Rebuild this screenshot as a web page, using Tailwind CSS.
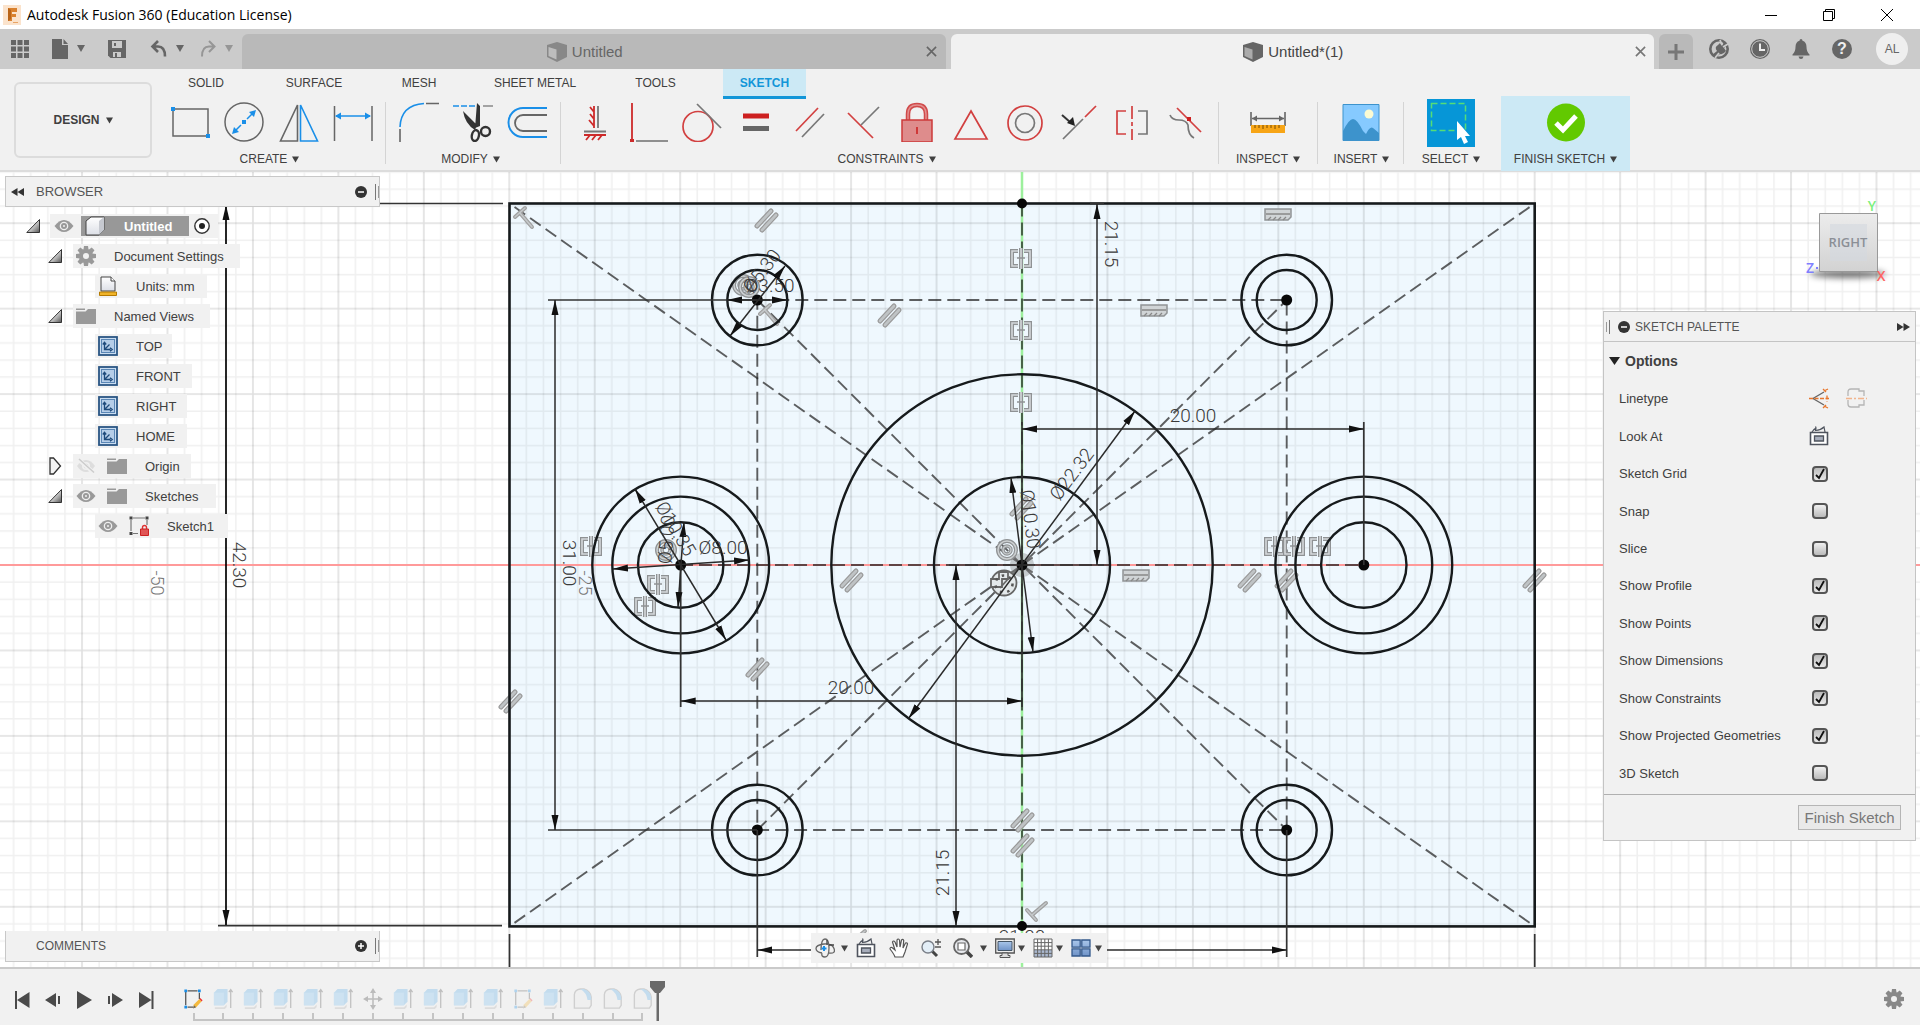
<!DOCTYPE html>
<html lang="en">
<head>
<meta charset="utf-8">
<title>Autodesk Fusion 360 (Education License)</title>
<script src="https://cdn.jsdelivr.net/npm/@tailwindcss/browser@4"></script>
</head>
<body class="h-screen min-h-[900px] flex flex-col overflow-hidden bg-white text-[#404040] font-['Liberation_Sans',Arial,sans-serif] text-xs">

<!-- shared symbols -->
<svg class="absolute size-0" aria-hidden="true">
  <defs>
    <linearGradient id="gTri" x1="0" y1="0" x2="1" y2="1"><stop offset="0.3" stop-color="#fff"/><stop offset="1" stop-color="#555"/></linearGradient>
    <linearGradient id="gCube" x1="0" y1="0" x2="0" y2="1"><stop offset="0" stop-color="#fff"/><stop offset="1" stop-color="#dcdfe6"/></linearGradient>
    <linearGradient id="gBlue" x1="0" y1="0" x2="0" y2="1"><stop offset="0" stop-color="#a9c6ea"/><stop offset="1" stop-color="#6f93c8"/></linearGradient>
  </defs>
  <symbol id="down" viewBox="0 0 8 8"><path d="M0 0.500h8L4 7.500z" fill="currentColor"/></symbol>
  <symbol id="open" viewBox="0 0 14 14"><path d="M13.500 0.500v13H0.800z" fill="url(#gTri)" stroke="#333"/></symbol>
  <symbol id="closed" viewBox="0 0 14 18"><path d="M2 1h3.500L12.500 9 5.500 17H2z" fill="#f4f4f4" stroke="#333" stroke-width="1.300"/></symbol>
  <symbol id="eye" viewBox="0 0 20 14"><path d="M0.500 7Q5 1 10 1t9.500 6Q15 13 10 13T0.500 7z" fill="#999"/><circle cx="10" cy="7" r="4.300" fill="#efefef"/><circle cx="10" cy="7" r="3" fill="#999"/><circle cx="10" cy="7" r="1" fill="#efefef"/></symbol>
  <symbol id="eyeoff" viewBox="0 0 20 16"><path d="M1 8Q5 2 10 2t9 6q-4 6-9 6T1 8z" fill="#ddd"/><circle cx="10" cy="8" r="4" fill="#f1f1f1"/><circle cx="10" cy="8" r="2.500" fill="#ddd"/><path d="M2 1l16 14" stroke="#f1f1f1" stroke-width="4"/><path d="M3 1l15 13.500" stroke="#ccc" stroke-width="1.500"/></symbol>
  <symbol id="folder" viewBox="0 0 20 18"><path d="M0 1.500h9v1.500H0zM0 4.500h9.500L12 2h8v15H0z" fill="#999"/></symbol>
  <symbol id="gear" viewBox="-10 -10 20 20"><g fill="currentColor"><path id="tooth" d="M-2-10h4l.6 4h-5.200zM-2 10h4l.6-4h-5.200z"/><use href="#tooth" transform="rotate(45)"/><use href="#tooth" transform="rotate(90)"/><use href="#tooth" transform="rotate(135)"/></g><circle r="5" fill="none" stroke="currentColor" stroke-width="4"/></symbol>
  <symbol id="view" viewBox="0 0 20 20"><rect x="1" y="1" width="18" height="18" fill="#c9dcf0" stroke="#2b5684" stroke-width="1.800"/><rect x="3.500" y="3.500" width="13" height="13" fill="#b5cde8" stroke="#5a86b5"/><path d="M6.500 7v6.500h6M7 13l4.500-4.500M4.800 8.500L6.500 6.300l1.700 2.200M12 11.800l2.200 1.700L12 15.200" fill="none" stroke="#1f4a7a" stroke-width="1.300"/></symbol>
  <symbol id="doccube" viewBox="0 0 20 20"><path d="M0 3l10-3 10 3v12l-10 5L0 15z" fill="currentColor"/><path d="M1.500 5l8 2.500v10L1.500 14z" fill="#fff" fill-opacity=".45"/></symbol>
  <symbol id="xx" viewBox="0 0 12 12"><path d="M1 1l10 10M11 1L1 11" stroke="currentColor" stroke-width="1.800"/></symbol>
  <symbol id="extrude" viewBox="0 0 22 24"><path d="M2 21h10l3-3v3l-2 2H2z" fill="#ddd"/><path d="M1 5l4-4h11v14l-4 4H1z" fill="#c3dcee"/><path d="M1 5h11v14H1z" fill="#cde2f1"/><path d="M19.500 22V3M17.500 4.500l2-3 2 3" fill="none" stroke="#bdbdbd" stroke-width="1.300"/></symbol>
  <symbol id="filletf" viewBox="0 0 22 24"><path d="M1.500 22V7Q2 2 8 1h4q7 2 8 9v9l-2 3z" fill="#efefef" stroke="#cfcfcf" stroke-width="1.500"/><path d="M8 1h4q7 2 8 9v3h-4Q15 5 8 1z" fill="#c3dcee"/></symbol>
  <symbol id="sketch" viewBox="0 0 22 24"><path d="M3 4v15M5 3h11M18 5v7M5 21h6" fill="none" stroke="#555" stroke-width="1.400"/><path d="M1.500 1.500h3v3h-3zM16.500 1.500h3v3h-3zM1.500 19.500h3v3h-3z" fill="#1a8fe8"/><path d="M11 22l1-4 6-6 2.500 2.500-6 6.500z" fill="#f4b93d"/><path d="M18 12l1-1 2.500 2.500-1 1.200z" fill="#e33"/><path d="M11 22.500l1-3.500 2.500 2.200z" fill="#666"/></symbol>
  <symbol id="lookat" viewBox="0 0 20 20"><path d="M1.500 6.500h17v12h-17z" fill="#fff" stroke="#4f545e" stroke-width="1.600"/><path d="M5.500 10h9v5h-9z" fill="#a7adbb" stroke="#4f545e" stroke-width="1.300"/><path d="M3 6q2-3 4-4l-.5-1.500M7 2l-.5 2.500Q12 4 15 1l1 5" fill="none" stroke="#4f545e" stroke-width="1.200"/></symbol>
</svg>

<header class="flex h-[29px] shrink-0 items-center bg-white pl-[3px] text-black">
  <svg class="h-5 w-[18px]" viewBox="0 0 18 20"><path d="M0 0h18v20H0z" fill="#fbe3cc"/><path d="M5 3h9v4H9v2h4v3H9v4H5z" fill="#d9812e"/><path d="M5 3l3 2v9l-3 2z" fill="#b96418"/><path d="M10 17h5v1h-5z" fill="#e8a465"/></svg>
  <h1 class="ml-[6px] font-['Open_Sans','Noto_Sans',sans-serif] text-sm">Autodesk Fusion 360 (Education License)</h1>
  <div class="ml-auto flex pr-1">
    <button aria-label="Minimize" class="flex h-7 w-[58px] items-center justify-center"><svg class="size-3" viewBox="0 0 12 12"><path d="M0 6.500h12" stroke="#000"/></svg></button>
    <button aria-label="Restore" class="flex h-7 w-[58px] items-center justify-center"><svg class="size-3" viewBox="0 0 12 12" fill="none" stroke="#000"><path d="M.5 2.500h9v9h-9zM2.500 2.500v-2h9v9h-2"/></svg></button>
    <button aria-label="Close" class="flex h-7 w-[58px] items-center justify-center"><svg class="size-3" viewBox="0 0 12 12" stroke="#000"><path d="M0 0l12 12M12 0L0 12"/></svg></button>
  </div>
</header>

<nav class="flex h-10 shrink-0 bg-[#cbcbcb] text-[#666]">
  <div class="flex w-[242px] shrink-0 items-center pl-[11px]">
    <button aria-label="Data panel"><svg class="size-[18px]" viewBox="0 0 18 18" fill="currentColor"><path d="M0 0h5v5H0zM6.500 0h5v5h-5zM13 0h5v5h-5zM0 6.500h5v5H0zM6.500 6.500h5v5h-5zM13 6.500h5v5h-5zM0 13h5v5H0zM6.500 13h5v5h-5zM13 13h5v5h-5z"/></svg></button>
    <button aria-label="File" class="ml-[22px]"><svg class="h-5 w-[34px]" viewBox="0 0 34 20" fill="currentColor"><path d="M1 0h10v6h6v14H1zM12.500 0l4.500 5h-4.500zM26 6h8l-4 7z"/></svg></button>
    <button aria-label="Save" class="ml-[23px]"><svg class="size-[18px]" viewBox="0 0 18 18" fill="currentColor"><path d="M0 0h18v18H2.500L0 15.500z"/><path d="M4 1h10v7H4zM5 12h8v5H5z" fill="#cbcbcb"/><path d="M6 3h2v3H6zM7 13h2v4H7z"/></svg></button>
    <button aria-label="Undo" class="ml-6"><svg class="h-5 w-[34px]" viewBox="0 0 34 20" fill="none"><path d="M8 2L2.500 7.500 8 13M3 7.500h5q7 0 7 10" stroke="currentColor" stroke-width="2.600"/><path d="M26 6h8l-4 7z" fill="currentColor"/></svg></button>
    <button aria-label="Redo" class="ml-[15px] text-[#969696]"><svg class="h-5 w-[34px]" viewBox="0 0 34 20" fill="none"><path d="M10 2l5.500 5.500L10 13M15 7.500h-5q-7 0-7 10" stroke="currentColor" stroke-width="2"/><path d="M26 6h8l-4 7z" fill="currentColor"/></svg></button>
  </div>
  <div class="mt-[5px] flex flex-1 items-center rounded-t-md bg-[#b9b9b9] text-[15px]">
    <a href="#" class="flex flex-1 items-center justify-center gap-[5px] pl-[10px]"><svg class="size-5 text-[#888]"><use href="#doccube"/></svg>Untitled</a>
    <button aria-label="Close tab" class="flex w-7 justify-center"><svg class="size-[11px]"><use href="#xx"/></svg></button>
  </div>
  <div class="mt-[5px] ml-[5px] flex flex-1 items-center rounded-t-md bg-[#f1f1f1] text-[15px] text-[#444]">
    <a href="#" class="flex flex-1 items-center justify-center gap-[5px] pl-[10px]"><svg class="size-5 text-[#666]"><use href="#doccube"/></svg>Untitled*(1)</a>
    <button aria-label="Close tab" class="flex w-7 justify-center text-[#777]"><svg class="size-[11px]"><use href="#xx"/></svg></button>
  </div>
  <button aria-label="New tab" class="mt-[5px] ml-[5px] flex w-[34px] items-center justify-center rounded-t-md bg-[#b9b9b9] text-[#777]"><svg class="size-4" viewBox="0 0 16 16"><path d="M8 0v16M0 8h16" stroke="currentColor" stroke-width="3"/></svg></button>
  <div class="flex w-[227px] shrink-0 items-center gap-[21px] pl-4">
    <button aria-label="Extensions"><svg class="size-5" viewBox="0 0 20 20"><circle cx="10" cy="10" r="8.700" fill="none" stroke="currentColor" stroke-width="2.600"/><path d="M3 16l5-4q-3-4 1-6l2-2 2 3 2-4 3 3-3 3 2 3q-3 4-6 3l-5 4z" fill="currentColor"/><path d="M11 1l2 5M14 8l5-3M6 19l4-5" stroke="#cbcbcb" stroke-width="1.800"/></svg></button>
    <button aria-label="Job status"><svg class="size-5" viewBox="0 0 20 20"><circle cx="10" cy="10" r="10" fill="currentColor"/><circle cx="10" cy="10" r="8.300" fill="none" stroke="#cbcbcb"/><path d="M10 4.500V11h5" fill="none" stroke="#eee" stroke-width="2"/></svg></button>
    <button aria-label="Notifications"><svg class="size-5" viewBox="0 0 20 20" fill="currentColor"><path d="M10 0q1.500 0 1.500 1.800 4 1.200 4 6.200 0 5 3 7.500v1H1.500v-1Q4.500 13 4.500 8q0-5 4-6.200Q8.500 0 10 0zM7.500 17.500h5q-.5 2.500-2.500 2.500t-2.500-2.500z"/></svg></button>
    <button aria-label="Help" class="flex size-5 items-center justify-center rounded-full bg-[#666] text-base font-bold text-[#eee]">?</button>
    <button class="ml-[3px] flex size-8 items-center justify-center rounded-full bg-[#efefef] text-xs text-[#666]">AL</button>
  </div>
</nav>

<section class="flex h-[103px] shrink-0 border-b-2 border-[#dcdcdc] bg-[#f1f1f1]">
  <button class="mt-[13px] ml-[14px] flex h-[76px] w-[138px] shrink-0 items-center justify-center gap-[6px] rounded-md border-2 border-[#dcdcdc] font-bold">DESIGN <svg class="size-[7px]"><use href="#down"/></svg></button>
  <div class="flex-1">
    <div class="flex h-[30px] items-stretch pl-[12px] text-xs">
      <a href="#" class="flex w-[84px] items-center justify-center pb-[2px]">SOLID</a>
      <a href="#" class="flex w-[132px] items-center justify-center pb-[2px]">SURFACE</a>
      <a href="#" class="flex w-[78px] items-center justify-center pb-[2px]">MESH</a>
      <a href="#" class="flex w-[154px] items-center justify-center pb-[2px]">SHEET METAL</a>
      <a href="#" class="flex w-[87px] items-center justify-center pb-[2px]">TOOLS</a>
      <a href="#" class="ml-[24px] flex w-[83px] items-center justify-center border-b-3 border-[#1296d8] bg-[#cce9f5] pt-px font-bold text-[#1296d8]">SKETCH</a>
    </div>
    <div class="-mt-[3px] flex h-[75px] pl-[11px]">
      <div class="flex w-[222px] flex-col">
        <div class="flex h-[51px] items-center pr-[5px]">
          <button aria-label="Rectangle" class="flex flex-1 justify-center"><svg class="size-10" viewBox="0 0 40 40"><path d="M3 7h35v27H3z" fill="none" stroke="#666" stroke-width="1.500"/><path d="M1 5h4v4H1zM36 32h4v4h-4z" fill="#1a8fe8"/></svg></button>
          <button aria-label="Circle" class="flex flex-1 justify-center"><svg class="size-10" viewBox="0 0 40 40"><circle cx="20" cy="20" r="19" fill="none" stroke="#666" stroke-width="1.500"/><path d="M18 18h4v4h-4z" fill="#1a8fe8"/><path d="M23 17l5-5M17 23l-5 5" stroke="#1a8fe8" stroke-width="1.500"/><path d="M32 8l-2 7-5-5zM8 32l2-7 5 5z" fill="#1a8fe8"/></svg></button>
          <button aria-label="Mirror" class="flex flex-1 justify-center"><svg class="size-10" viewBox="0 0 40 40" fill="none" stroke-width="1.600"><path d="M18.500 3v36H1.500z" stroke="#666"/><path d="M21.500 3v36h17z" stroke="#1a8fe8"/></svg></button>
          <button aria-label="Dimension" class="flex flex-1 justify-center"><svg class="size-10" viewBox="0 0 40 40"><path d="M1.500 4v35M39 4v35" stroke="#666" stroke-width="1.500"/><path d="M3 14h34" stroke="#1a8fe8" stroke-width="1.500"/><path d="M2 14l6-3.500v7zM38 14l-6-3.500v7z" fill="#1a8fe8"/></svg></button>
        </div>
        <button class="flex h-6 items-center justify-center gap-[5px] pr-[9px]">CREATE <svg class="size-[7px]"><use href="#down"/></svg></button>
      </div>
      <div class="mt-[6px] h-[62px] w-px bg-[#d4d4d4]"></div>
      <div class="flex w-[174px] flex-col">
        <div class="flex h-[51px] items-center px-[6px]">
          <button aria-label="Fillet" class="flex flex-1 justify-center"><svg class="size-10" viewBox="0 0 40 40" fill="none" stroke-width="1.600"><path d="M1 25Q2 3 25 1.500" stroke="#1a8fe8"/><path d="M1 27v13M27 1.500h13" stroke="#666"/></svg></button>
          <button aria-label="Trim" class="flex flex-1 justify-center"><svg class="size-10" viewBox="0 0 40 40"><path d="M0 4h22" stroke="#1a8fe8" stroke-width="1.600" stroke-dasharray="6 2"/><path d="M30 4h10" stroke="#888" stroke-width="1.500"/><path d="M24 1l3 3v20l-5 2zM10 9l14 14-2 5Q12 22 10 9z" fill="#333"/><ellipse cx="22.500" cy="33.500" rx="3.500" ry="5.500" fill="none" stroke="#333" stroke-width="2.400" transform="rotate(12 22 33)"/><circle cx="32.500" cy="29.500" r="4.500" fill="none" stroke="#333" stroke-width="2.400"/></svg></button>
          <button aria-label="Offset" class="flex flex-1 justify-center"><svg class="size-10" viewBox="0 0 40 40" fill="none" stroke-width="1.800"><path d="M40 6H16a14 14 0 0 0 0 29h24" stroke="#1a8fe8" stroke-width="2"/><path d="M40 13H16a8 8 0 0 0 0 16h24" stroke="#666"/></svg></button>
        </div>
        <button class="flex h-6 items-center justify-center gap-[5px] pr-[5px]">MODIFY <svg class="size-[7px]"><use href="#down"/></svg></button>
      </div>
      <div class="mt-[6px] h-[62px] w-px bg-[#d4d4d4]"></div>
      <div class="flex w-[657px] flex-col">
        <div class="flex h-[51px] items-center pr-[5px] pl-[7px]">
          <button aria-label="Horizontal/Vertical" class="flex flex-1 justify-center"><svg class="size-10" viewBox="0 0 40 40" stroke-width="1.800" fill="none"><path d="M19 4v22M19 10l-4-5M19 17l-4-5M19 24l-5-6M9 33h22M15 33l-4 5M21 33l-4 5M27 33l-4 5" stroke="#cd2a2a"/><path d="M23 4v22M9 29.500h22" stroke="#777"/></svg></button>
          <button aria-label="Coincident" class="flex flex-1 justify-center"><svg class="size-10" viewBox="0 0 40 40"><path d="M3 1v36" stroke="#cd2a2a" stroke-width="1.800"/><path d="M7 39h32" stroke="#777" stroke-width="1.600"/><path d="M1 37h4v3H1z" fill="#cd2a2a"/></svg></button>
          <button aria-label="Tangent" class="flex flex-1 justify-center"><svg class="size-10" viewBox="0 0 40 40" fill="none" stroke-width="1.700"><circle cx="16" cy="24.500" r="15" stroke="#d24040"/><path d="M15 2l24 24" stroke="#777"/></svg></button>
          <button aria-label="Equal" class="flex flex-1 justify-center"><svg class="size-10" viewBox="0 0 40 40"><path d="M7 11.500h26v5H7z" fill="#cd2020"/><path d="M7 24h26v5H7z" fill="#666"/></svg></button>
          <button aria-label="Parallel" class="flex flex-1 justify-center"><svg class="size-10" viewBox="0 0 40 40" stroke-width="1.700"><path d="M6 29L28 6" stroke="#d24040"/><path d="M12 35l22-23" stroke="#777"/></svg></button>
          <button aria-label="Perpendicular" class="flex flex-1 justify-center"><svg class="size-10" viewBox="0 0 40 40" stroke-width="1.700"><path d="M4 11l25 25" stroke="#d24040"/><path d="M17 23L35 5" stroke="#777"/></svg></button>
          <button aria-label="Fix" class="flex flex-1 justify-center"><svg class="size-10" viewBox="0 0 40 40"><path d="M11 18v-6q0-9 9-9t9 9v6" fill="none" stroke="#d04a4a" stroke-width="4.500"/><path d="M11 18v-6q0-9 9-9t9 9v6" fill="none" stroke="#e39090" stroke-width="1.500"/><path d="M5 18h30v22H5z" fill="#de8c8c" stroke="#cd3a3a" stroke-width="1.500"/><path d="M20 25v7" stroke="#cd2a2a" stroke-width="1.700"/></svg></button>
          <button aria-label="Midpoint triangle" class="flex flex-1 justify-center"><svg class="size-10" viewBox="0 0 40 40"><path d="M20 9l16 28H4z" fill="none" stroke="#d24040" stroke-width="1.700"/></svg></button>
          <button aria-label="Concentric" class="flex flex-1 justify-center"><svg class="size-10" viewBox="0 0 40 40" fill="none" stroke-width="1.700"><circle cx="20" cy="21" r="17" stroke="#d24040"/><circle cx="20" cy="21" r="9.500" stroke="#777"/></svg></button>
          <button aria-label="Collinear" class="flex flex-1 justify-center"><svg class="size-10" viewBox="0 0 40 40" stroke-width="1.700"><path d="M4 37l20-20" stroke="#777"/><path d="M26 15L37 4" stroke="#d24040"/><path d="M3 13l8 7" stroke="#333" stroke-width="2"/><path d="M16 24l-8-3 6-6z" fill="#222"/></svg></button>
          <button aria-label="Symmetry" class="flex flex-1 justify-center"><svg class="size-10" viewBox="0 0 40 40" fill="none" stroke-width="1.700"><path d="M14 9H5v23h9" stroke="#d24040"/><path d="M26 9h9v23h-9" stroke="#777"/><path d="M20 4v13M20 20v4M20 27v11" stroke="#d24040"/></svg></button>
          <button aria-label="Curvature" class="flex flex-1 justify-center"><svg class="size-10" viewBox="0 0 40 40" fill="none" stroke-width="1.700"><path d="M11 6l24 24" stroke="#d24040"/><path d="M4 13q2 5 9 5t9 5q0 10 6 13" stroke="#777"/><path d="M21 15h4v4h-4z" fill="#cd2020"/></svg></button>
        </div>
        <button class="flex h-6 items-center justify-center gap-[5px] pr-[6px]">CONSTRAINTS <svg class="size-[7px]"><use href="#down"/></svg></button>
      </div>
      <div class="mt-[6px] h-[62px] w-px bg-[#d4d4d4]"></div>
      <button class="flex w-[98px] flex-col items-center">
        <span class="flex h-[51px] items-center"><svg class="size-10" viewBox="0 0 40 40"><path d="M3 10v14M37 10v14M4 16.500h32" stroke="#666" stroke-width="1.600"/><path d="M4 16.500l5-3v6zM36 16.500l-5-3v6z" fill="#666"/><path d="M3 23h34v8H3z" fill="#f7a516"/><path d="M7 23v3M11 23v3M15 23v4M19 23v3M23 23v3M27 23v4M31 23v3" stroke="#7a4d00"/></svg></span>
        <span class="flex h-6 items-center gap-[5px]">INSPECT <svg class="size-[7px]"><use href="#down"/></svg></span>
      </button>
      <div class="mt-[6px] h-[62px] w-px bg-[#d4d4d4]"></div>
      <button class="flex w-[85px] flex-col items-center">
        <span class="flex h-[51px] items-center"><svg class="size-10" viewBox="0 0 40 40"><path d="M2 2.500h36v36H2z" fill="#86caff"/><circle cx="28" cy="12" r="4.500" fill="#fbfbd3"/><path d="M2 29q6-12 10-12 4 0 10 12l3 3q4-8 7-6l6 5v7.500H2z" fill="#3d93cc"/><path d="M2 2.500h36v36H2z" fill="none" stroke="#3d93cc"/></svg></span>
        <span class="flex h-6 items-center gap-[5px] pl-[2px]">INSERT <svg class="size-[7px]"><use href="#down"/></svg></span>
      </button>
      <div class="mt-[6px] h-[62px] w-px bg-[#d4d4d4]"></div>
      <button class="flex w-[97px] flex-col items-center pr-[3px]">
        <span class="flex h-[51px] items-end"><svg class="size-12" viewBox="0 0 48 48"><path d="M0 0h48v48H0z" fill="#0696d7"/><path d="M4.500 4.500h34v27h-34z" fill="none" stroke="#55dd77" stroke-width="1.500" stroke-dasharray="6 3"/><path d="M30 22v19l4-3 3 7 4-2-3-6h5z" fill="#fff"/></svg></span>
        <span class="flex h-6 items-center gap-[5px]">SELECT <svg class="size-[7px]"><use href="#down"/></svg></span>
      </button>
      <button class="flex w-[129px] flex-col items-center bg-[#cce9f5]">
        <span class="flex h-[51px] items-center"><svg class="size-10" viewBox="0 0 40 40"><circle cx="20" cy="20.500" r="19" fill="#62c900"/><path d="M10 21l7 7 13-14" fill="none" stroke="#fff" stroke-width="5"/></svg></span>
        <span class="flex h-6 items-center gap-[5px]">FINISH SKETCH <svg class="size-[7px]"><use href="#down"/></svg></span>
      </button>
    </div>
  </div>
</section>

<main class="relative flex-1 overflow-hidden">
  <svg class="absolute inset-0 size-full font-['Roboto','Liberation_Sans',sans-serif] font-light" viewBox="0 172 1920 795" preserveAspectRatio="xMidYMid slice">
    <defs>
      <pattern id="grid" x="1022" y="565" width="85.450" height="85.450" patternUnits="userSpaceOnUse">
        <path d="M17.100 0v86M34.200 0v86M51.300 0v86M68.400 0v86M0 17.100h86M0 34.200h86M0 51.300h86M0 68.400h86" stroke="#000" stroke-opacity=".06" stroke-width="1.500" fill="none"/>
        <path d="M0 0v86M0 0h86M85.450 0v86M0 85.450h86" stroke="#000" stroke-opacity=".12" stroke-width="1.600" fill="none"/>
      </pattern>
      <marker id="ar" viewBox="0 0 15 8" refX="15" refY="4" markerWidth="15" markerHeight="8" markerUnits="userSpaceOnUse" orient="auto-start-reverse"><path d="M0 .5L15 4 0 7.500z" fill="#111"/></marker>
      <g id="par" fill="none" stroke-linecap="round"><path d="M-9 6L5-9M-4 10L10-5" stroke="#999" stroke-width="5"/><path d="M-9 6L5-9M-4 10L10-5" stroke="#bfc3c5" stroke-width="2.600"/></g>
      <g id="perp" fill="none" stroke-linecap="round"><path d="M-9-2L0 8M-4 3L10-9" stroke="#a0a0a0" stroke-width="4"/><path d="M-9-2L0 8M-4 3L10-9" stroke="#c4c8ca" stroke-width="1.600"/></g>
      <g id="sym" fill="none"><path d="M-3-7h-6V8h6M3-7h6V8H3M0-10v21" stroke="#8f9294" stroke-width="4"/><path d="M-3-7h-6V8h6M3-7h6V8H3M0-10v21" stroke="#d4d8da" stroke-width="1.600"/><path d="M-4 0h8" stroke="#8f9294" stroke-width="1.500"/></g>
      <g id="hor" fill="none"><path d="M-13-6h26V2L10 5h-23z" fill="#d0d4d6" stroke="#909395" stroke-width="1.500"/><path d="M-12-1h24M-10 5l3-3M-5 5l3-3M0 5l3-3M5 5l3-3" stroke="#888" stroke-width="1.300"/></g>
      <g id="con" fill="none"><circle r="9" stroke="#8f9294" stroke-width="4"/><circle r="4" stroke="#8f9294" stroke-width="3.500"/><circle r="9" stroke="#ccd0d2" stroke-width="1.500"/><circle r="4" stroke="#ccd0d2" stroke-width="1.200"/></g>
    </defs>

    <rect x="509" y="203.500" width="1026" height="723" fill="#eff8fe"/>
    <rect x="-2000" y="-1000" width="6000" height="3000" fill="url(#grid)"/>
    <path d="M-2000 565h6000" stroke="#ff9a9a" stroke-width="2"/>
    <path d="M1022-1000v3000" stroke="#9df09d" stroke-width="2.500"/>

    <g class="text-[#777]" fill="currentColor" font-size="18" text-anchor="middle">
      <text transform="translate(151 583) rotate(90)">-50</text>
      <text transform="translate(579 583) rotate(90)">-25</text>
    </g>

    <!-- construction geometry -->
    <g stroke="#222" stroke-opacity=".72" stroke-width="1.900" fill="none" stroke-dasharray="13 6">
      <path d="M1022 565L509.500 203.500M1022 565L1534.700 926.400M1022 565L509.500 926.400M1022 565L1534.700 203.500"/>
      <path d="M757.300 300L1286.700 830M757.300 830L1286.700 300M757.300 300H1286.700V830H757.300z"/>
      <path d="M680 565H1363.600M1022 203.500V926.400"/>
    </g>

    <!-- constraint glyphs -->
    <use href="#par" x="766" y="220"/><use href="#par" x="889" y="315"/><use href="#par" x="1021" y="508"/><use href="#par" x="851" y="580"/>
    <use href="#par" x="757" y="669"/><use href="#par" x="510" y="701"/><use href="#par" x="1022" y="820"/><use href="#par" x="1022" y="845"/>
    <use href="#par" x="1249" y="580"/><use href="#par" x="1286" y="580"/><use href="#par" x="1534" y="580"/>
    <use href="#perp" x="1036" y="912"/><use href="#perp" x="855" y="940"/>
    <use href="#perp" transform="translate(523 217) rotate(90)"/><use href="#perp" transform="translate(768 314) rotate(90)"/>
    <use href="#sym" x="1021" y="258"/><use href="#sym" x="1021" y="330"/><use href="#sym" x="1021" y="402"/>
    <use href="#sym" x="591" y="546"/><use href="#sym" x="658" y="584"/><use href="#sym" x="645" y="606"/>
    <use href="#sym" x="1275" y="546"/><use href="#sym" x="1294" y="546"/><use href="#sym" x="1320" y="546"/>
    <use href="#hor" x="1278" y="215"/><use href="#hor" x="1154" y="311"/><use href="#hor" x="1136" y="576"/>
    <use href="#con" x="743" y="285"/><use href="#con" x="749" y="287"/><use href="#con" x="666" y="550"/><use href="#con" x="1007" y="550"/>
    <g fill="#e3e8ea" stroke="#666" stroke-width="1.800"><circle cx="1004" cy="583" r="12.500"/><path d="M991 579h8v-7h9v7h-6v8h-11z"/><path d="M1008 579l-8 9" fill="none"/><circle cx="1004" cy="584" r="8.500" fill="none" stroke="#555" stroke-width="2.500" stroke-dasharray="2.500 5"/></g>
    <circle cx="1022" cy="565" r="12" fill="#888" fill-opacity=".4"/>

    <!-- solid profile geometry -->
    <g fill="none" stroke="#161a1c" stroke-width="2.400">
      <rect x="509.500" y="203.500" width="1025.200" height="722.900" stroke-width="2.600"/>
      <circle cx="1022" cy="565" r="190.700"/><circle cx="1022" cy="565" r="88"/>
      <circle cx="680.700" cy="565" r="88.400"/><circle cx="680.700" cy="565" r="68.400"/><circle cx="680.700" cy="565" r="42.700"/>
      <circle cx="1363.800" cy="565" r="88.400"/><circle cx="1363.800" cy="565" r="68.400"/><circle cx="1363.800" cy="565" r="42.700"/>
      <circle cx="757.300" cy="300" r="45.300"/><circle cx="757.300" cy="300" r="30"/>
      <circle cx="1286.700" cy="300" r="45.300"/><circle cx="1286.700" cy="300" r="30"/>
      <circle cx="757.300" cy="830" r="45.300"/><circle cx="757.300" cy="830" r="30"/>
      <circle cx="1286.700" cy="830" r="45.300"/><circle cx="1286.700" cy="830" r="30"/>
    </g>
    <g fill="#080808">
      <circle cx="1022" cy="565" r="5.500"/><circle cx="680.700" cy="565" r="5.500"/><circle cx="1363.800" cy="565" r="5.500"/>
      <circle cx="757.300" cy="300" r="5.500"/><circle cx="1286.700" cy="300" r="5.500"/><circle cx="757.300" cy="830" r="5.500"/><circle cx="1286.700" cy="830" r="5.500"/>
      <circle cx="1022" cy="203.500" r="5"/><circle cx="1022" cy="926" r="5"/>
    </g>

    <!-- extension lines -->
    <path d="M218 203.500H503M218 925.700H502M548 300H757M548 830H757M509.500 934V1200M1534.700 934V1200M757.300 830V957M1286.700 830V957M680.700 565V707M1363.800 565V422M1022 422V707M1022 565H1104M949 565H1022M1090 203.500h14" stroke="#333" stroke-width="1.700" fill="none"/>

    <!-- dimension lines -->
    <g stroke="#2a2a2a" stroke-width="1.500" fill="none">
      <g marker-start="url(#ar)" marker-end="url(#ar)">
        <path d="M226 205V925" stroke="#000" stroke-width="1.700"/><path d="M555 300V830"/><path d="M1097 204V565"/><path d="M956 565V926"/>
        <path d="M680.700 701H1022"/><path d="M1022 429H1364"/><path d="M757.300 950H1286.700"/>
        <path d="M908.500 718.500L1135 411"/><path d="M1011 478L1033 652"/>
        <path d="M635 489L726 640"/><path d="M613 569L749 560"/><path d="M684 522L678 607"/>
        <path d="M727 300H787"/><path d="M730 336L785 266"/>
      </g>
    </g>

    <!-- dimension values -->
    <g fill="#3a3a3a" font-size="19" text-anchor="middle">
      <text transform="translate(233 565) rotate(90)">42.30</text>
      <text transform="translate(563 563) rotate(90)">31.00</text>
      <text transform="translate(1105 244) rotate(90)">21.15</text>
      <text transform="translate(949 873) rotate(-90)">21.15</text>
      <text x="851" y="694">20.00</text>
      <text x="1193" y="422">20.00</text>
      <text x="1022" y="943">31.00</text>
      <text transform="translate(1077 478) rotate(-53)">Ø22.32</text>
      <text transform="translate(1024 520) rotate(83)">Ø10.30</text>
      <text x="723" y="554">Ø8.00</text>
      <text transform="translate(670 532) rotate(59)">Ø10.35</text>
      <text transform="translate(673 540) rotate(-86)">Ø5.00</text>
      <text x="770" y="292">Ø3.50</text>
      <text transform="translate(767 275) rotate(-52)">Ø5.30</text>
    </g>
  </svg>

  <!-- browser tree -->
  <aside class="absolute top-[4px] left-[5px] text-[13px] leading-none">
    <div class="flex h-[31px] w-[375px] items-center border border-[#c8c8c8] bg-[#f1f1f1] pl-[5px] text-[#555]">
      <button aria-label="Collapse browser"><svg class="h-2 w-[13px]" viewBox="0 0 13 8" fill="#333"><path d="M6.500 0v8L0 4zM13 0v8L6.500 4z"/></svg></button>
      <h2 class="ml-3">BROWSER</h2>
      <button aria-label="Browser options" class="ml-auto"><svg class="size-3" viewBox="0 0 12 12"><circle cx="6" cy="6" r="6" fill="#333"/><path d="M3 6h6" stroke="#fff" stroke-width="1.500"/></svg></button>
      <div class="ml-2 flex items-center gap-[2px]"><span class="h-4 w-px bg-[#777]"></span><span class="h-3 w-px bg-[#999]"></span></div>
    </div>
    <ul class="mt-[7px] flex flex-col gap-[6px]">
      <li class="flex items-center pl-[21px]"><svg class="size-[14px]"><use href="#open"/></svg>
        <div class="ml-[10px] flex h-6 items-center bg-[#f1f1f1] pr-2"><svg class="ml-1 h-[14px] w-5"><use href="#eye"/></svg>
          <div class="ml-[7px] flex h-5 w-[108px] items-center bg-[#989898] pl-1 font-bold text-white"><svg class="size-5" viewBox="0 0 20 20"><path d="M1 5l5-4h13v13l-5 5H1z" fill="url(#gCube)" stroke="#444"/><path d="M14 5l5-4v13l-5 5z" fill="#c6c9d0"/></svg><span class="ml-[19px]">Untitled</span></div>
          <svg class="ml-[5px] size-4" viewBox="0 0 16 16"><circle cx="8" cy="8" r="7.200" fill="#fff" stroke="#333" stroke-width="1.400"/><circle cx="8" cy="8" r="3" fill="#222"/></svg></div></li>
      <li class="flex items-center pl-[43px]"><svg class="size-[14px]"><use href="#open"/></svg><div class="ml-[11px] flex h-6 w-[167px] items-center bg-[#f1f1f1] pl-[3px]"><svg class="size-5 text-[#999]"><use href="#gear"/></svg><span class="ml-[18px] whitespace-nowrap">Document Settings</span></div></li>
      <li class="flex pl-[90px]"><div class="flex h-6 w-[112px] items-center bg-[#f1f1f1] pl-[4px]"><svg class="h-5 w-[18px]" viewBox="0 0 18 20"><path d="M2 1h10l4 4v10H2z" fill="url(#gCube)" stroke="#444"/><path d="M12 1v4h4" fill="#fff" stroke="#444"/><path d="M.5 16h17v3.500H.5z" fill="#f0b429" stroke="#b57a00"/></svg><span class="ml-[19px]">Units: mm</span></div></li>
      <li class="flex items-center pl-[43px]"><svg class="size-[14px]"><use href="#open"/></svg><div class="ml-[11px] flex h-6 w-[137px] items-center bg-[#f1f1f1] pl-[3px]"><svg class="h-[18px] w-5"><use href="#folder"/></svg><span class="ml-[18px]">Named Views</span></div></li>
      <li class="flex pl-[90px]"><div class="flex h-6 w-[77px] items-center bg-[#f1f1f1] pl-[3px]"><svg class="size-5"><use href="#view"/></svg><span class="ml-[18px]">TOP</span></div></li>
      <li class="flex pl-[90px]"><div class="flex h-6 w-[97px] items-center bg-[#f1f1f1] pl-[3px]"><svg class="size-5"><use href="#view"/></svg><span class="ml-[18px]">FRONT</span></div></li>
      <li class="flex pl-[90px]"><div class="flex h-6 w-[92px] items-center bg-[#f1f1f1] pl-[3px]"><svg class="size-5"><use href="#view"/></svg><span class="ml-[18px]">RIGHT</span></div></li>
      <li class="flex pl-[90px]"><div class="flex h-6 w-[92px] items-center bg-[#f1f1f1] pl-[3px]"><svg class="size-5"><use href="#view"/></svg><span class="ml-[18px]">HOME</span></div></li>
      <li class="flex items-center pl-[43px]"><svg class="h-[18px] w-[14px]"><use href="#closed"/></svg><div class="ml-[11px] flex h-6 w-[118px] items-center bg-[#f1f1f1] pl-[3px]"><svg class="h-4 w-5"><use href="#eyeoff"/></svg><svg class="ml-[11px] h-[18px] w-5"><use href="#folder"/></svg><span class="ml-[18px]">Origin</span></div></li>
      <li class="flex items-center pl-[43px]"><svg class="size-[14px]"><use href="#open"/></svg><div class="ml-[11px] flex h-6 w-[143px] items-center bg-[#f1f1f1] pl-[3px]"><svg class="h-[14px] w-5"><use href="#eye"/></svg><svg class="ml-[11px] h-[18px] w-5"><use href="#folder"/></svg><span class="ml-[18px]">Sketches</span></div></li>
      <li class="flex pl-[90px]"><div class="flex h-6 w-[133px] items-center bg-[#f1f1f1] pl-[3px]"><svg class="h-[14px] w-5"><use href="#eye"/></svg><svg class="ml-[11px] size-5" viewBox="0 0 20 20"><path d="M2 4v11M4 2h12M18 4v5M4 17.500h5" stroke="#777" stroke-width="1.200"/><path d="M.5.500h3v3h-3zM16.500.500h3v3h-3zM.5 16h3v3h-3z" fill="#444"/><path d="M13.500 13v-1.500q0-2 2-2t2 2V13" fill="none" stroke="#d33" stroke-width="1.400"/><path d="M11.500 13h8v6.500h-8z" fill="#e05555" stroke="#c22"/></svg><span class="ml-[18px]">Sketch1</span></div></li>
    </ul>
  </aside>

  <!-- view cube -->
  <svg class="absolute top-[23px] right-[20px] h-[92px] w-[120px] font-['Open_Sans','Noto_Sans',sans-serif] font-semibold" viewBox="-30 0 120 92" role="img" aria-label="View cube">
    <defs><linearGradient id="vc" x1="0" y1="0" x2="0" y2="1"><stop offset="0" stop-color="#ececec"/><stop offset="1" stop-color="#d2d2d2"/></linearGradient><filter id="bl" x="-20%" y="-200%" width="140%" height="500%"><feGaussianBlur stdDeviation="3"/></filter></defs>
    <ellipse cx="38" cy="79" rx="38" ry="4" fill="#000" fill-opacity=".55" filter="url(#bl)"/>
    <path d="M9.500 18.500h58v58h-58z" fill="url(#vc)" stroke="#999"/>
    <path d="M20 29h37v37H20z" fill="#d4d8e0" fill-opacity=".6"/>
    <g font-size="14" text-anchor="middle">
      <text x="38" y="52" font-size="13" fill="#8b8f96">RIGHT</text>
      <text x="62" y="16" fill="#7cf07c">Y</text>
      <text x="0" y="78" fill="#7f7fff">Z</text>
      <text x="71" y="86" fill="#ff6464">X</text>
    </g>
    <path d="M6 72h2v2H6z" fill="#7f7fff"/>
  </svg>

  <!-- sketch palette -->
  <aside class="absolute top-[139px] right-[4px] w-[313px] border border-[#c4c4c4] bg-[#f1f1f1] text-sm leading-none">
    <div class="flex h-[30px] items-center border-b border-[#c4c4c4] pr-[5px] pl-[2px] text-xs text-[#555]">
      <div class="flex items-center gap-[2px]"><span class="h-[10px] w-px bg-[#999]"></span><span class="h-[14px] w-px bg-[#777]"></span></div>
      <button aria-label="Palette options" class="ml-2"><svg class="size-3" viewBox="0 0 12 12"><circle cx="6" cy="6" r="6" fill="#333"/><path d="M3 6h6" stroke="#fff" stroke-width="1.500"/></svg></button>
      <h2 class="ml-[5px]">SKETCH PALETTE</h2>
      <button aria-label="Collapse palette" class="ml-auto"><svg class="h-2 w-[13px]" viewBox="0 0 13 8" fill="#333"><path d="M0 0v8l6.500-4zM6.500 0v8L13 4z"/></svg></button>
    </div>
    <button class="mt-[7px] flex h-[24px] items-center pl-[5px] font-bold"><svg class="mr-[5px] h-2 w-[11px]" viewBox="0 0 11 8"><path d="M0 0h11L5.500 8z" fill="#222"/></svg>Options</button>
    <div class="mt-[7px] grid h-[412px] auto-rows-fr grid-cols-[193px_1fr] items-center pl-[15px] text-[13px]">
      <span>Linetype</span>
      <span class="-ml-[3px] flex gap-[16px]">
        <button aria-label="Construction"><svg class="size-[21px]" viewBox="0 0 21 21" fill="none" stroke-width="1.300"><path d="M15 4L4 10.500 15 17" stroke="#666"/><path d="M0 10.500h20M18 7.500v6" stroke="#e8762c" stroke-dasharray="4 1.500"/><path d="M15 3l4-2M15 18l4 2M14 1l3 3M17 17l-3 3" stroke="#e8762c"/></svg></button>
        <button aria-label="Centerline"><svg class="size-[21px]" viewBox="0 0 21 21" fill="none" stroke-width="1.300"><path d="M2 8V4q0-3 3-3h8v2h5v5M2 12v4q0 3 3 3h8v-2h5v-5" stroke="#b5b5b5"/><path d="M0 10.500h21" stroke="#f2b48c" stroke-dasharray="6 2 2 2"/></svg></button>
      </span>
      <span>Look At</span><button aria-label="Look At" class="-ml-[3px] w-5"><svg class="size-5"><use href="#lookat"/></svg></button>
      <label for="o1">Sketch Grid</label><span class="grid size-4"><input id="o1" type="checkbox" checked class="peer col-start-1 row-start-1 size-4 appearance-none rounded-[4px] border-2 border-[#555] bg-linear-to-b from-[#f0f0f0] to-[#bbb] checked:from-[#bbb] checked:to-[#e8e8e8]"><svg class="pointer-events-none col-start-1 row-start-1 hidden size-4 peer-checked:block" viewBox="0 0 16 16"><path d="M4 9l3 3 5-9" fill="none" stroke="#111" stroke-width="1.800"/></svg></span>
      <label for="o2">Snap</label><span class="grid size-4"><input id="o2" type="checkbox" class="peer col-start-1 row-start-1 size-4 appearance-none rounded-[4px] border-2 border-[#555] bg-linear-to-b from-[#f0f0f0] to-[#bbb] checked:from-[#bbb] checked:to-[#e8e8e8]"><svg class="pointer-events-none col-start-1 row-start-1 hidden size-4 peer-checked:block" viewBox="0 0 16 16"><path d="M4 9l3 3 5-9" fill="none" stroke="#111" stroke-width="1.800"/></svg></span>
      <label for="o3">Slice</label><span class="grid size-4"><input id="o3" type="checkbox" class="peer col-start-1 row-start-1 size-4 appearance-none rounded-[4px] border-2 border-[#555] bg-linear-to-b from-[#f0f0f0] to-[#bbb] checked:from-[#bbb] checked:to-[#e8e8e8]"><svg class="pointer-events-none col-start-1 row-start-1 hidden size-4 peer-checked:block" viewBox="0 0 16 16"><path d="M4 9l3 3 5-9" fill="none" stroke="#111" stroke-width="1.800"/></svg></span>
      <label for="o4">Show Profile</label><span class="grid size-4"><input id="o4" type="checkbox" checked class="peer col-start-1 row-start-1 size-4 appearance-none rounded-[4px] border-2 border-[#555] bg-linear-to-b from-[#f0f0f0] to-[#bbb] checked:from-[#bbb] checked:to-[#e8e8e8]"><svg class="pointer-events-none col-start-1 row-start-1 hidden size-4 peer-checked:block" viewBox="0 0 16 16"><path d="M4 9l3 3 5-9" fill="none" stroke="#111" stroke-width="1.800"/></svg></span>
      <label for="o5">Show Points</label><span class="grid size-4"><input id="o5" type="checkbox" checked class="peer col-start-1 row-start-1 size-4 appearance-none rounded-[4px] border-2 border-[#555] bg-linear-to-b from-[#f0f0f0] to-[#bbb] checked:from-[#bbb] checked:to-[#e8e8e8]"><svg class="pointer-events-none col-start-1 row-start-1 hidden size-4 peer-checked:block" viewBox="0 0 16 16"><path d="M4 9l3 3 5-9" fill="none" stroke="#111" stroke-width="1.800"/></svg></span>
      <label for="o6">Show Dimensions</label><span class="grid size-4"><input id="o6" type="checkbox" checked class="peer col-start-1 row-start-1 size-4 appearance-none rounded-[4px] border-2 border-[#555] bg-linear-to-b from-[#f0f0f0] to-[#bbb] checked:from-[#bbb] checked:to-[#e8e8e8]"><svg class="pointer-events-none col-start-1 row-start-1 hidden size-4 peer-checked:block" viewBox="0 0 16 16"><path d="M4 9l3 3 5-9" fill="none" stroke="#111" stroke-width="1.800"/></svg></span>
      <label for="o7">Show Constraints</label><span class="grid size-4"><input id="o7" type="checkbox" checked class="peer col-start-1 row-start-1 size-4 appearance-none rounded-[4px] border-2 border-[#555] bg-linear-to-b from-[#f0f0f0] to-[#bbb] checked:from-[#bbb] checked:to-[#e8e8e8]"><svg class="pointer-events-none col-start-1 row-start-1 hidden size-4 peer-checked:block" viewBox="0 0 16 16"><path d="M4 9l3 3 5-9" fill="none" stroke="#111" stroke-width="1.800"/></svg></span>
      <label for="o8">Show Projected Geometries</label><span class="grid size-4"><input id="o8" type="checkbox" checked class="peer col-start-1 row-start-1 size-4 appearance-none rounded-[4px] border-2 border-[#555] bg-linear-to-b from-[#f0f0f0] to-[#bbb] checked:from-[#bbb] checked:to-[#e8e8e8]"><svg class="pointer-events-none col-start-1 row-start-1 hidden size-4 peer-checked:block" viewBox="0 0 16 16"><path d="M4 9l3 3 5-9" fill="none" stroke="#111" stroke-width="1.800"/></svg></span>
      <label for="o9">3D Sketch</label><span class="grid size-4"><input id="o9" type="checkbox" class="peer col-start-1 row-start-1 size-4 appearance-none rounded-[4px] border-2 border-[#555] bg-linear-to-b from-[#f0f0f0] to-[#bbb] checked:from-[#bbb] checked:to-[#e8e8e8]"><svg class="pointer-events-none col-start-1 row-start-1 hidden size-4 peer-checked:block" viewBox="0 0 16 16"><path d="M4 9l3 3 5-9" fill="none" stroke="#111" stroke-width="1.800"/></svg></span>
    </div>
    <div class="mt-[2px] flex h-[46px] items-center justify-end border-t border-[#b0b0b0] pr-[14px]">
      <button class="h-[25px] w-[103px] border border-[#b5b5b5] bg-[#e9e9e9] text-[15px] text-[#777]">Finish Sketch</button>
    </div>
  </aside>

  <!-- comments -->
  <div class="absolute bottom-[5px] left-[5px] flex h-[31px] w-[375px] items-center border border-t-0 border-[#c8c8c8] bg-[#f1f1f1] pl-[30px] text-[#555]">
    <h2>COMMENTS</h2>
    <button aria-label="Expand comments" class="ml-auto"><svg class="size-3" viewBox="0 0 12 12"><circle cx="6" cy="6" r="6" fill="#333"/><path d="M3 6h6M6 3v6" stroke="#fff" stroke-width="1.500"/></svg></button>
    <div class="ml-2 flex items-center gap-[2px]"><span class="h-4 w-px bg-[#777]"></span><span class="h-3 w-px bg-[#999]"></span></div>
  </div>

  <!-- navigation bar -->
  <div class="absolute bottom-[4px] left-1/2 -ml-[149px] flex h-[30px] w-[296px] items-center bg-[#f1f1f1] pl-1 text-[#444]">
    <button aria-label="Orbit" class="flex items-center gap-[6px]"><svg class="size-5" viewBox="0 0 20 20" fill="none" stroke="#666" stroke-width="1.300"><path d="M7 15q-6-1-6-4.500T9 6t10 4.500-5 4.500M6 12Q6 1 10 1t4 9-4 9-3-4"/><path d="M9 8v5M6.500 10.500h5" stroke="#1a8fe8" stroke-width="2"/><path d="M12 2v5M14 7h5" stroke="#444"/></svg><svg class="size-[7px]"><use href="#down"/></svg></button>
    <button aria-label="Look at" class="ml-2"><svg class="size-5"><use href="#lookat"/></svg></button>
    <button aria-label="Pan" class="ml-[13px]"><svg class="size-5" viewBox="0 0 20 20"><path d="M6 19q-1-3-5-8 0-2 2-1.500L6 12 3.500 4q1-2 2.500 0l2 5V2q1-2 2.500 0l.5 7 1.500-7q1.500-1.500 2.200.5L14 10l2.500-5q2-.5 2 1l-2.500 8-2 5z" fill="#fff" stroke="#555" stroke-width="1.200"/></svg></button>
    <button aria-label="Zoom" class="ml-[12px]"><svg class="size-5" viewBox="0 0 20 20"><path d="M11 13l5 5" stroke="#444" stroke-width="3"/><circle cx="7" cy="9" r="6" fill="#e3eef7" stroke="#7a7f88" stroke-width="1.400"/><path d="M17 1v6M14 4h6M14 9h6" stroke="#555" stroke-width="1.300"/></svg></button>
    <button aria-label="Fit" class="ml-[12px] flex items-center gap-[7px]"><svg class="size-5" viewBox="0 0 20 20"><path d="M13 13l6 6" stroke="#444" stroke-width="3.500"/><circle cx="8.500" cy="8.500" r="7.500" fill="#e8eaee" stroke="#666" stroke-width="1.800"/><path d="M5 5h7v7H5z" fill="#fff" stroke="#666" stroke-width="1.200"/></svg><svg class="size-[7px]"><use href="#down"/></svg></button>
    <button aria-label="Display settings" class="ml-2 flex items-center gap-[3px]"><svg class="size-5" viewBox="0 0 20 20"><path d="M.7 1h18.600v14H.7z" fill="#eee" stroke="#555" stroke-width="1.300"/><path d="M3 3.500h14v9H3z" fill="url(#gBlue)" stroke="#456"/><path d="M7 15h6v2.500h2v2H5v-2h2z" fill="#ddd" stroke="#555"/></svg><svg class="size-[7px]"><use href="#down"/></svg></button>
    <button aria-label="Grid settings" class="ml-2 flex items-center gap-[3px]"><svg class="size-5" viewBox="0 0 20 20"><path d="M1 1h18v18H1z" fill="#fff"/><path d="M1 12h18v7H1z" fill="#aab8cf"/><path d="M1 1h18v18H1zM4.600 1v18M8.200 1v18M11.800 1v18M15.400 1v18M1 4.600h18M1 8.200h18M1 11.800h18M1 15.400h18" fill="none" stroke="#666"/></svg><svg class="size-[7px]"><use href="#down"/></svg></button>
    <button aria-label="Viewports" class="ml-2 flex items-center gap-[4px]"><svg class="size-5" viewBox="0 0 20 20" fill="url(#gBlue)" stroke="#34598c" stroke-width="1.300"><path d="M1 2h8.200v7.200H1zM10.800 2H19v7.200h-8.200zM1 10.800h8.200V18H1zM10.800 10.800H19V18h-8.200z"/></svg><svg class="size-[7px]"><use href="#down"/></svg></button>
  </div>
</main>

<footer class="flex h-[58px] shrink-0 border-t-2 border-[#cacaca] bg-[#f1f1f1]">
  <div class="flex h-[62px] w-[168px] shrink-0 items-center gap-[11px] pl-3 text-[#4a4a4a]">
    <button aria-label="To start"><svg class="h-[18px] w-5" viewBox="0 0 20 18" fill="currentColor"><path d="M3 0h2v18H3zM17.500 1v16L5 9z"/></svg></button>
    <button aria-label="Step back"><svg class="h-[18px] w-5" viewBox="0 0 20 18" fill="currentColor"><path d="M13 2v14L2 9zM15 5h2v8h-2z"/></svg></button>
    <button aria-label="Play"><svg class="h-[18px] w-5" viewBox="0 0 20 18" fill="currentColor"><path d="M3 0l15 9-15 9z"/></svg></button>
    <button aria-label="Step forward"><svg class="h-[18px] w-5" viewBox="0 0 20 18" fill="currentColor"><path d="M3 5h2v8H3zM7 2l11 7-11 7z"/></svg></button>
    <button aria-label="To end"><svg class="h-[18px] w-5" viewBox="0 0 20 18" fill="currentColor"><path d="M3 1l12.500 8L3 17zM15.500 0h2v18h-2z"/></svg></button>
  </div>
  <div class="flex pl-[10px]">
    <ol id="timeline" class="flex pt-[19px]"></ol>
    <svg class="-ml-2 mt-[12px] h-10 w-4" viewBox="0 0 16 40"><path d="M0 0h15v6l-5 6H5L0 6z" fill="#6a6a6a"/><path d="M6.500 10h2.500v30H6.500z" fill="#6a6a6a"/></svg>
  </div>
  <button aria-label="Preferences" class="mr-4 ml-auto pt-1 text-[#888]"><svg class="size-5"><use href="#gear"/></svg></button>
</footer>

<script>
  const features = ['sketch','extrude','extrude','extrude','extrude','extrude','move','extrude','extrude','extrude','extrude','sketch','extrude','filletf','filletf','filletf'];
  const list = document.getElementById('timeline');
  features.forEach((f, i) => {
    const icon = f === 'move'
      ? '<svg class="h-[22px] w-5" viewBox="0 0 20 22"><path d="M10 3v16M3 11h14" stroke="#bbb" stroke-width="1.500"/><path d="M10 0l3 5H7zM10 22l3-5H7zM0 11l5-3v6zM20 11l-5-3v6z" fill="#bbb"/></svg>'
      : '<svg class="h-[22px] w-5' + (f === 'sketch' && i ? ' opacity-30' : '') + '"><use href="#' + f + '"/></svg>';
    const rail = i === 0 ? 'ml-[15px] w-[15px] border-l-2' : i === features.length - 1 ? 'mr-[15px] w-[15px] border-r-2' : 'w-[30px]';
    const tick = i > 0 && i < features.length - 1 ? '<span class="h-[6px] w-[2px] bg-[#c4c4c4]"></span>' : '';
    list.insertAdjacentHTML('beforeend',
      '<li class="flex w-[30px] flex-col"><button class="flex w-[30px] justify-center" aria-label="Feature ' + (i + 1) + '">' + icon + '</button>' +
      '<div class="mt-[3px] flex h-[8px] justify-center border-b-2 border-[#c4c4c4] ' + rail + '">' + tick + '</div></li>');
  });
</script>
</body>
</html>
